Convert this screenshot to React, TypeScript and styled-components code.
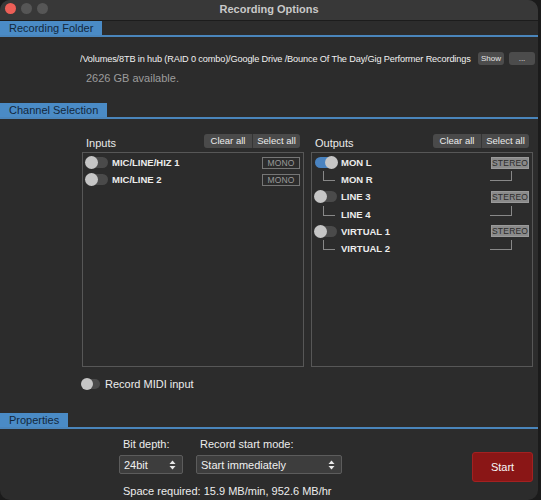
import React from 'react';
import styled, { createGlobalStyle } from 'styled-components';

const GlobalStyle = createGlobalStyle`
  html, body {
    margin: 0;
    padding: 0;
    background: #1b1b1b;
  }
  body {
    font-family: 'Liberation Sans', 'DejaVu Sans', sans-serif;
    -webkit-font-smoothing: antialiased;
  }
`;

interface Channel {
  name: string;
  pair?: string;
  on?: boolean;
}

const inputs: Channel[] = [{ name: 'MIC/LINE/HIZ 1' }, { name: 'MIC/LINE 2' }];

const outputs: Channel[] = [
  { name: 'MON L', pair: 'MON R', on: true },
  { name: 'LINE 3', pair: 'LINE 4' },
  { name: 'VIRTUAL 1', pair: 'VIRTUAL 2' },
];

const App: React.FC = () => {
  return (
    <>
      <GlobalStyle />
      <Window>
        <TitleBar>
          <Lights>
            <Light color="#ed5f57" />
            <Light color="#565656" />
            <Light color="#565656" />
          </Lights>
          <Title>Recording Options</Title>
          <div />
        </TitleBar>

        <SectionHead>
          <Tab>Recording Folder</Tab>
        </SectionHead>
        <FolderBody>
          <PathRow>
            <PathText>/Volumes/8TB in hub (RAID 0 combo)/Google Drive /Bounce Of The Day/Gig Performer Recordings</PathText>
            <SmallButton>Show</SmallButton>
            <SmallButton wide>...</SmallButton>
          </PathRow>
          <Available>2626 GB available.</Available>
        </FolderBody>

        <SectionHead>
          <Tab>Channel Selection</Tab>
        </SectionHead>
        <ChannelBody>
          <Columns>
            <Panel>
              <PanelHead>
                <PanelLabel>Inputs</PanelLabel>
                <Segmented>
                  <Segment>Clear all</Segment>
                  <Segment>Select all</Segment>
                </Segmented>
              </PanelHead>
              <ListBox>
                {inputs.map((c) => (
                  <Row key={c.name}>
                    <Toggle on={c.on} />
                    <RowLabel>{c.name}</RowLabel>
                    <Badge>MONO</Badge>
                  </Row>
                ))}
              </ListBox>
            </Panel>
            <Panel>
              <PanelHead>
                <PanelLabel>Outputs</PanelLabel>
                <Segmented>
                  <Segment>Clear all</Segment>
                  <Segment>Select all</Segment>
                </Segmented>
              </PanelHead>
              <ListBox>
                {outputs.map((c) => (
                  <React.Fragment key={c.name}>
                    <Row>
                      <Toggle on={c.on} />
                      <RowLabel>{c.name}</RowLabel>
                      <Badge stereo>STEREO</Badge>
                    </Row>
                    <Row>
                      <LeftBracket />
                      <RowLabel>{c.pair}</RowLabel>
                      <RightBracket />
                    </Row>
                  </React.Fragment>
                ))}
              </ListBox>
            </Panel>
          </Columns>
          <MidiRow>
            <Toggle small />
            <MidiLabel>Record MIDI input</MidiLabel>
          </MidiRow>
        </ChannelBody>

        <SectionHead>
          <Tab>Properties</Tab>
        </SectionHead>
        <PropsBody>
          <PropsMain>
            <Fields>
              <Field>
                <FieldLabel>Bit depth:</FieldLabel>
                <Select width={64}>
                  <span>24bit</span>
                  <Arrows />
                </Select>
              </Field>
              <Field>
                <FieldLabel>Record start mode:</FieldLabel>
                <Select width={146}>
                  <span>Start immediately</span>
                  <Arrows />
                </Select>
              </Field>
            </Fields>
            <SpaceText>Space required: 15.9 MB/min, 952.6 MB/hr</SpaceText>
          </PropsMain>
          <StartButton>Start</StartButton>
        </PropsBody>
      </Window>
    </>
  );
};

const Arrows: React.FC = () => (
  <svg width="7" height="10" viewBox="0 0 7 10">
    <path d="M3.5 0.5 L6.5 4 H0.5 Z" fill="#e8e8e8" />
    <path d="M3.5 9.5 L6.5 6 H0.5 Z" fill="#e8e8e8" />
  </svg>
);

const Window = styled.div`
  width: 538px;
  height: 500px;
  background: #2c2c2c;
  border-radius: 10px;
  overflow: hidden;
  display: flex;
  flex-direction: column;
`;

const TitleBar = styled.div`
  height: 20px;
  background: #383838;
  border-bottom: 1px solid #1c1c1c;
  display: grid;
  grid-template-columns: 1fr auto 1fr;
  align-items: center;
`;

const Lights = styled.div`
  display: flex;
  gap: 5px;
  padding-left: 5px;
  margin-top: -4px;
`;

const Light = styled.div<{ color: string }>`
  width: 11px;
  height: 11px;
  border-radius: 50%;
  background: ${(p) => p.color};
`;

const Title = styled.div`
  color: #c9c9c9;
  font-size: 11px;
  font-weight: bold;
  margin-top: -2px;
`;

const SectionHead = styled.div`
  display: flex;
  border-bottom: 2px solid #4a85bb;
`;

const Tab = styled.div`
  background: #4a8bc6;
  color: #13283c;
  font-size: 11px;
  height: 14px;
  line-height: 15px;
  padding: 0 9px;
`;

const FolderBody = styled.div`
  height: 66px;
  padding: 15px 0 0 80px;
  box-sizing: border-box;
`;

const PathRow = styled.div`
  display: flex;
  align-items: center;
`;

const PathText = styled.div`
  color: #f0f0f0;
  font-size: 9.2px;
  letter-spacing: -0.15px;
  width: 398px;
  white-space: nowrap;
  overflow: hidden;
`;

const SmallButton = styled.div<{ wide?: boolean }>`
  background: #4c4c4c;
  color: #e6e6e6;
  font-size: 8px;
  border-radius: 3px;
  height: 13px;
  line-height: 13px;
  width: 26px;
  text-align: center;
  margin-left: ${(p) => (p.wide ? 5 : 0)}px;
`;

const Available = styled.div`
  color: #9c9c9c;
  font-size: 11px;
  margin: 7px 0 0 6px;
`;

const ChannelBody = styled.div`
  padding: 14px 0 0 82px;
  height: 294px;
  box-sizing: border-box;
`;

const Columns = styled.div`
  display: flex;
  gap: 7px;
`;

const Panel = styled.div`
  width: 222px;
  display: flex;
  flex-direction: column;
`;

const PanelHead = styled.div`
  display: flex;
  align-items: center;
  justify-content: space-between;
  padding: 0 4px 3px 4px;
`;

const PanelLabel = styled.div`
  color: #eaeaea;
  font-size: 11px;
  padding-top: 4px;
`;

const Segmented = styled.div`
  display: flex;
  background: #4a4a4a;
  border-radius: 3px;
  height: 14px;
  overflow: hidden;
`;

const Segment = styled.div`
  color: #ececec;
  font-size: 9.5px;
  line-height: 14px;
  width: 48px;
  box-sizing: border-box;
  text-align: center;
  & + & {
    border-left: 1px solid #353535;
  }
`;

const ListBox = styled.div`
  border: 1px solid #575757;
  height: 215px;
  box-sizing: border-box;
  padding: 1px 3px;
`;

const Row = styled.div`
  height: 17.2px;
  display: flex;
  align-items: center;
`;

const Toggle = styled.div<{ on?: boolean; small?: boolean }>`
  position: relative;
  width: ${(p) => (p.small ? 18 : 22)}px;
  height: ${(p) => (p.small ? 10 : 11)}px;
  border-radius: 6px;
  background: ${(p) => (p.on ? '#4a83c0' : '#4a4a4a')};
  flex-shrink: 0;
  &::after {
    content: '';
    position: absolute;
    top: -1px;
    ${(p) => (p.on ? 'right: -1px;' : 'left: -1px;')}
    width: ${(p) => (p.small ? 12 : 13)}px;
    height: ${(p) => (p.small ? 12 : 13)}px;
    border-radius: 50%;
    background: #c6c6c6;
  }
`;

const RowLabel = styled.div`
  color: #ececec;
  font-size: 9.5px;
  font-weight: bold;
  margin-left: 4px;
`;

const Badge = styled.div<{ stereo?: boolean }>`
  margin-left: auto;
  width: 38px;
  height: 12px;
  box-sizing: border-box;
  font-size: 8.5px;
  line-height: 11px;
  text-align: center;
  letter-spacing: 0.2px;
  border: 1px solid ${(p) => (p.stereo ? '#9a9a9a' : '#767676')};
  background: ${(p) => (p.stereo ? '#8a8a8a' : 'transparent')};
  color: ${(p) => (p.stereo ? '#2b2b2b' : '#9a9a9a')};
`;

const LeftBracket = styled.div`
  align-self: flex-start;
  width: 11px;
  height: 9px;
  margin: 0 2px 0 8px;
  border-left: 1px solid #888;
  border-bottom: 1px solid #888;
`;

const RightBracket = styled.div`
  align-self: flex-start;
  margin-left: auto;
  margin-right: 17px;
  width: 21px;
  height: 9px;
  border-right: 1px solid #888;
  border-bottom: 1px solid #888;
`;

const MidiRow = styled.div`
  display: flex;
  align-items: center;
  margin-top: 11px;
`;

const MidiLabel = styled.div`
  color: #ececec;
  font-size: 11px;
  margin-left: 5px;
`;

const PropsBody = styled.div`
  flex: 1;
  display: flex;
  padding: 9px 5px 0 119px;
`;

const PropsMain = styled.div`
  flex: 1;
  display: flex;
  flex-direction: column;
`;

const Fields = styled.div`
  display: flex;
  gap: 13px;
`;

const Field = styled.div`
  display: flex;
  flex-direction: column;
  gap: 5px;
`;

const FieldLabel = styled.div`
  color: #ececec;
  font-size: 11px;
  padding-left: 4px;
`;

const Select = styled.div<{ width: number }>`
  width: ${(p) => p.width}px;
  height: 19px;
  box-sizing: border-box;
  background: #3d3d3d;
  border: 1px solid #5c5c5c;
  border-radius: 2px;
  color: #f0f0f0;
  font-size: 11px;
  display: flex;
  align-items: center;
  justify-content: space-between;
  padding: 0 6px 0 4px;
`;

const SpaceText = styled.div`
  color: #ececec;
  font-size: 11px;
  margin: 11px 0 0 4px;
`;

const StartButton = styled.div`
  width: 61px;
  height: 30px;
  margin-top: 14px;
  box-sizing: border-box;
  background: #8a1616;
  border: 1px solid #a32121;
  border-radius: 3px;
  color: #f6f6f6;
  font-size: 11px;
  display: flex;
  align-items: center;
  justify-content: center;
`;

export default App;
